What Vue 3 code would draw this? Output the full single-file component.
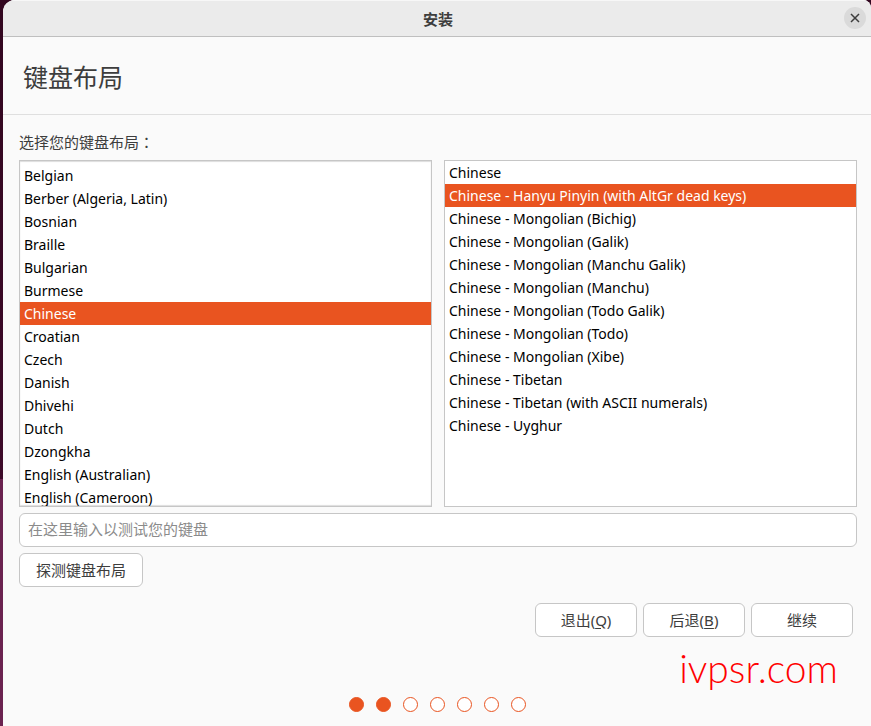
<template>
    <div class="desktop">
        <main class="window">
            <header class="titlebar">
                <span class="titlebar-text">安装</span>
                <button class="close" type="button" aria-label="关闭">
                    <svg width="10" height="10" viewBox="0 0 10 10">
                        <path d="M1 1L9 9M9 1L1 9" fill="none" stroke="#3d3d3d" stroke-width="1.5" />
                    </svg>
                </button>
            </header>
            <h1 class="heading">键盘布局</h1>
            <section class="content">
                <p class="label" id="layout-label">选择您的键盘布局<span class="colon">：</span></p>
                <div class="lists">
                    <div class="list list-scrolled" role="listbox" aria-labelledby="layout-label">
                        <button
                            v-for="layout in layouts"
                            :key="layout"
                            class="option"
                            :class="{ selected: layout === selectedLayout }"
                            type="button"
                            role="option"
                            :aria-selected="layout === selectedLayout"
                            @click="selectedLayout = layout"
                        >{{ layout }}</button>
                    </div>
                    <div class="list" role="listbox" aria-labelledby="layout-label">
                        <button
                            v-for="variant in variants"
                            :key="variant"
                            class="option"
                            :class="{ selected: variant === selectedVariant }"
                            type="button"
                            role="option"
                            :aria-selected="variant === selectedVariant"
                            @click="selectedVariant = variant"
                        >{{ variant }}</button>
                    </div>
                </div>
                <input v-model="testText" class="test-input" type="text" placeholder="在这里输入以测试您的键盘" aria-label="在这里输入以测试您的键盘">
                <button class="button detect" type="button">探测键盘布局</button>
            </section>
            <div class="actions">
                <button class="button action" type="button">退出(<u>Q</u>)</button>
                <button class="button action" type="button">后退(<u>B</u>)</button>
                <button class="button action" type="button">继续</button>
            </div>
            <footer class="steps">
                <span v-for="step in 7" :key="step" class="step" :class="{ done: step <= currentStep }"></span>
            </footer>
            <span class="watermark">ivpsr.com</span>
        </main>
    </div>
</template>

<script setup>
    import {ref} from "vue"

    const layouts = [
        "Belgian",
        "Berber (Algeria, Latin)",
        "Bosnian",
        "Braille",
        "Bulgarian",
        "Burmese",
        "Chinese",
        "Croatian",
        "Czech",
        "Danish",
        "Dhivehi",
        "Dutch",
        "Dzongkha",
        "English (Australian)",
        "English (Cameroon)"
    ]

    const variants = [
        "Chinese",
        "Chinese - Hanyu Pinyin (with AltGr dead keys)",
        "Chinese - Mongolian (Bichig)",
        "Chinese - Mongolian (Galik)",
        "Chinese - Mongolian (Manchu Galik)",
        "Chinese - Mongolian (Manchu)",
        "Chinese - Mongolian (Todo Galik)",
        "Chinese - Mongolian (Todo)",
        "Chinese - Mongolian (Xibe)",
        "Chinese - Tibetan",
        "Chinese - Tibetan (with ASCII numerals)",
        "Chinese - Uyghur"
    ]

    const selectedLayout = ref("Chinese")

    const selectedVariant = ref("Chinese - Hanyu Pinyin (with AltGr dead keys)")

    const testText = ref("")

    const currentStep = ref(2)
</script>

<style>
    body {
        margin: 0;
    }
</style>

<style scoped>
    .desktop {
        box-sizing: border-box;
        height: 100vh;
        min-height: 520px;
        padding-left: 3px;
        background: linear-gradient(#32061f 0%, #3d0a29 66%, #6b2350 66%, #6b2350 100%);
        font-family: "Noto Sans", "Noto Sans CJK SC", sans-serif;
        font-size: 14px;
        color: #3d3d3d;
    }
    .window {
        position: relative;
        display: flex;
        flex-direction: column;
        height: 100%;
        background: #FAFAFA;
        border-radius: 12px 8px 0 0;
        overflow: hidden;
    }
    .titlebar {
        display: grid;
        grid-template-columns: 1fr auto 1fr;
        align-items: center;
        box-sizing: border-box;
        height: 37px;
        padding: 0 5px 1px 7px;
        background: #EBEBEB;
        border-top: 1px solid #F7F7F7;
        border-bottom: 1px solid #BFBFBF;
    }
    .titlebar-text {
        grid-column: 2;
        font-size: 15px;
        font-weight: 700;
    }
    .close {
        display: flex;
        align-items: center;
        justify-content: center;
        justify-self: end;
        width: 22px;
        height: 22px;
        padding: 0;
        border: 0;
        border-radius: 50%;
        background: #DADADA;
    }
    .heading {
        margin: 0;
        padding: 22px 20px 18px;
        border-bottom: 1px solid #DFDFDF;
        font-size: 25px;
        font-weight: 400;
        line-height: 37px;
    }
    .content {
        display: flex;
        flex: 1;
        flex-direction: column;
        min-height: 0;
        padding: 16px 14px 16px 16px;
    }
    .label {
        margin: 0 0 6px;
        font-size: 15px;
        line-height: 23px;
    }
    .colon {
        font-family: "Noto Sans CJK TC", sans-serif;
        line-height: 1;
    }
    .lists {
        display: flex;
        flex: 1;
        gap: 12px;
        min-height: 0;
        margin-bottom: 6px;
    }
    .list {
        flex: 1;
        box-sizing: border-box;
        overflow-y: auto;
        scrollbar-width: none;
        background: #FFFFFF;
        border: 1px solid #C6C6C6;
    }
    .list-scrolled {
        padding-top: 3px;
        box-shadow: inset 0 1px 1px #DDDDDD, inset 0 -1px 1px #DDDDDD;
    }
    .option {
        display: block;
        width: 100%;
        padding: 0 4px;
        border: 0;
        background: none;
        color: #000000;
        font-family: inherit;
        font-size: 14px;
        line-height: 23px;
        text-align: left;
        white-space: nowrap;
    }
    .option.selected {
        background: #E95420;
        color: #FFFFFF;
    }
    .test-input {
        box-sizing: border-box;
        width: 100%;
        height: 34px;
        margin-bottom: 6px;
        padding: 0 8px 2px;
        border: 1px solid #C6C6C6;
        border-radius: 6px;
        background: #FFFFFF;
        font-family: inherit;
        font-size: 15px;
    }
    .test-input::placeholder {
        color: #8B8B8B;
    }
    .button {
        box-sizing: border-box;
        height: 34px;
        padding: 0 16px 2px;
        border: 1px solid #C6C6C6;
        border-radius: 6px;
        background: #FFFFFF;
        color: #3d3d3d;
        font-family: inherit;
        font-size: 15px;
    }
    .button u {
        text-underline-offset: 2px;
    }
    .detect {
        align-self: flex-start;
    }
    .actions {
        display: flex;
        justify-content: flex-end;
        gap: 6px;
        padding-right: 18px;
    }
    .action {
        min-width: 102px;
    }
    .steps {
        display: flex;
        justify-content: center;
        gap: 12px;
        padding: 60px 0 14px;
    }
    .step {
        box-sizing: border-box;
        width: 15px;
        height: 15px;
        border: 1px solid #E95420;
        border-radius: 50%;
        background: #FFFFFF;
    }
    .step.done {
        background: #E95420;
    }
    .watermark {
        position: absolute;
        right: 33px;
        bottom: 34px;
        color: #FF0000;
        font-family: Lato, sans-serif;
        font-size: 39px;
        font-weight: 300;
        line-height: 48px;
    }
</style>
